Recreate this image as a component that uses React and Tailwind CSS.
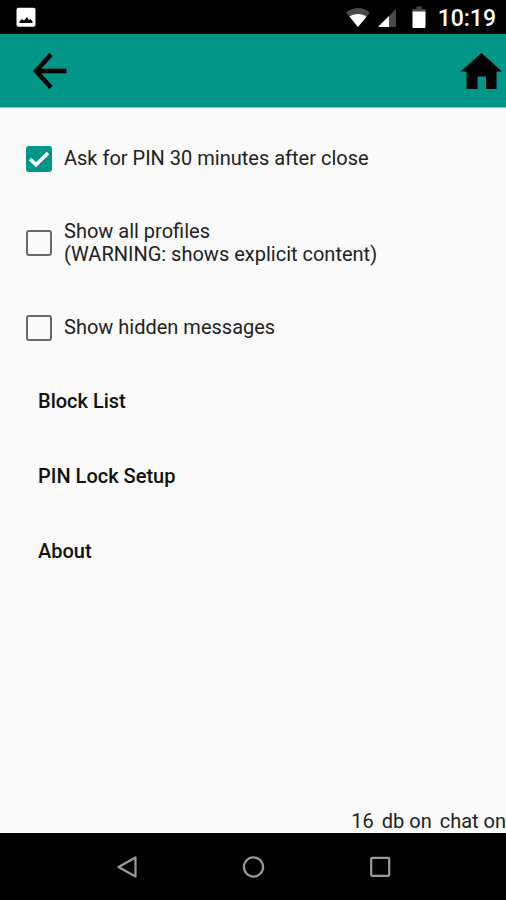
import { useState } from 'react';

const OPTIONS = [
  { id: 'ask-pin', lines: ['Ask for PIN 30 minutes after close'], checked: true },
  { id: 'all-profiles', lines: ['Show all profiles', '(WARNING: shows explicit content)'], checked: false },
  { id: 'hidden-messages', lines: ['Show hidden messages'], checked: false },
];

const MENU = ['Block List', 'PIN Lock Setup', 'About'];

function StatusBar() {
  return (
    <div className="flex h-[34px] items-center justify-between bg-black pr-2.5 pl-4 text-white">
      <svg viewBox="0 0 20 20" className="size-5" aria-hidden="true">
        <rect x="0.5" y="0.7" width="19" height="19" rx="2" fill="#fff" />
        <path d="M3.5 16 V14.5 L6 12 L8 13.5 L11 10 L13 13 L14.5 12 L16.5 14.5 V16 Z" fill="#000" />
      </svg>
      <div className="flex items-center">
        <svg viewBox="0 0 24 20" className="h-5 w-6" aria-hidden="true">
          <path d="M12 20 L0 5.5 C7 -0.5 17 -0.5 24 5.5 Z" fill="#4a4a4a" />
          <path d="M12 20 L3.5 9.5 C8 6 16 6 20.5 9.5 Z" fill="#fff" />
        </svg>
        <svg viewBox="0 -2 18 20" className="ml-2 h-5 w-[18px]" aria-hidden="true">
          <path d="M18 0 V18 H0 Z" fill="#4a4a4a" />
          <path d="M11 7 V18 H0 Z" fill="#fff" />
        </svg>
        <svg viewBox="0 0 14 22" className="ml-4 h-[22px] w-3.5" aria-hidden="true">
          <path d="M4.5 0.5 H9.5 V3 H13.5 V7 H0.5 V3 H4.5 Z" fill="#4a4a4a" />
          <path d="M0.5 5.5 H13.5 V21 Q13.5 22 12.5 22 H1.5 Q0.5 22 0.5 21 Z" fill="#fff" />
        </svg>
        <span className="ml-3 pt-1 text-[23px] leading-7 font-medium">10:19</span>
      </div>
    </div>
  );
}

function Header() {
  return (
    <header className="flex h-[74px] items-center justify-between border-b border-[#8ccbc4] bg-[#009688] pr-1 pl-8">
      <button type="button" aria-label="Back">
        <svg viewBox="0 0 36 38" className="h-[38px] w-9" fill="none" stroke="#000" strokeWidth="4.6" aria-hidden="true">
          <path d="M19 2.5 L4 19 L19 35.5" />
          <path d="M4 19 H34.5" />
        </svg>
      </button>
      <button type="button" aria-label="Home">
        <svg viewBox="0 0 42 36" className="h-9 w-[42px]" aria-hidden="true">
          <path d="M21.5 0 L42 18.5 H36.5 V36 H26 V23.5 H17.5 V36 H6.5 V18.5 H0.5 Z" fill="#000" />
        </svg>
      </button>
    </header>
  );
}

function CheckRow({ option }) {
  const [checked, setChecked] = useState(option.checked);

  return (
    <label htmlFor={option.id} className="flex items-center gap-3 py-[25px] pl-[26px] text-[#222]">
      <span className="grid shrink-0">
        <input
          id={option.id}
          type="checkbox"
          checked={checked}
          onChange={(e) => setChecked(e.target.checked)}
          className="col-start-1 row-start-1 -my-0.5 size-[26px] appearance-none rounded-[3px] border-2 border-[#6a6a6a] checked:border-[#009688] checked:bg-[#009688]"
        />
        {checked && (
          <svg
            viewBox="0 0 26 26"
            className="pointer-events-none col-start-1 row-start-1 -my-0.5 size-[26px]"
            fill="none"
            stroke="#fff"
            strokeWidth="3.6"
            aria-hidden="true"
          >
            <path d="M4 13 L10 18.8 L22 7" />
          </svg>
        )}
      </span>
      <span>
        {option.lines.map((line) => (
          <span key={line} className="block">
            {line}
          </span>
        ))}
      </span>
    </label>
  );
}

function NavBar() {
  return (
    <nav className="flex h-[67px] items-center justify-center gap-[104px] bg-black">
      <button type="button" aria-label="Back">
        <svg viewBox="0 0 22 24" className="h-6 w-[22px]" fill="none" stroke="#9a9a9a" strokeWidth="2.2" strokeLinejoin="round" aria-hidden="true">
          <path d="M20.5 2.5 V21.5 L3.5 12 Z" />
        </svg>
      </button>
      <button type="button" aria-label="Home">
        <svg viewBox="0 0 24 24" className="size-6" fill="none" stroke="#9a9a9a" strokeWidth="2.2" aria-hidden="true">
          <circle cx="12.5" cy="12" r="9.6" />
        </svg>
      </button>
      <button type="button" aria-label="Recent apps">
        <svg viewBox="0 0 22 24" className="h-6 w-[22px]" fill="none" stroke="#9a9a9a" strokeWidth="2.2" aria-hidden="true">
          <rect x="2.2" y="2.8" width="18" height="18" rx="1" />
        </svg>
      </button>
    </nav>
  );
}

export default function App() {
  return (
    <div className="flex min-h-screen flex-col bg-[#fafafa] font-[Roboto,sans-serif] text-xl leading-[23px]">
      <StatusBar />
      <Header />
      <main className="flex grow flex-col pt-3.5">
        {OPTIONS.map((option) => (
          <CheckRow key={option.id} option={option} />
        ))}
        {MENU.map((item) => (
          <button key={item} type="button" className="py-[26px] pl-[38px] text-left font-medium text-[#111]">
            {item}
          </button>
        ))}
      </main>
      <footer className="flex justify-end gap-2 text-[#222]">
        <span>16</span>
        <span>db on</span>
        <span>chat on</span>
      </footer>
      <NavBar />
    </div>
  );
}
